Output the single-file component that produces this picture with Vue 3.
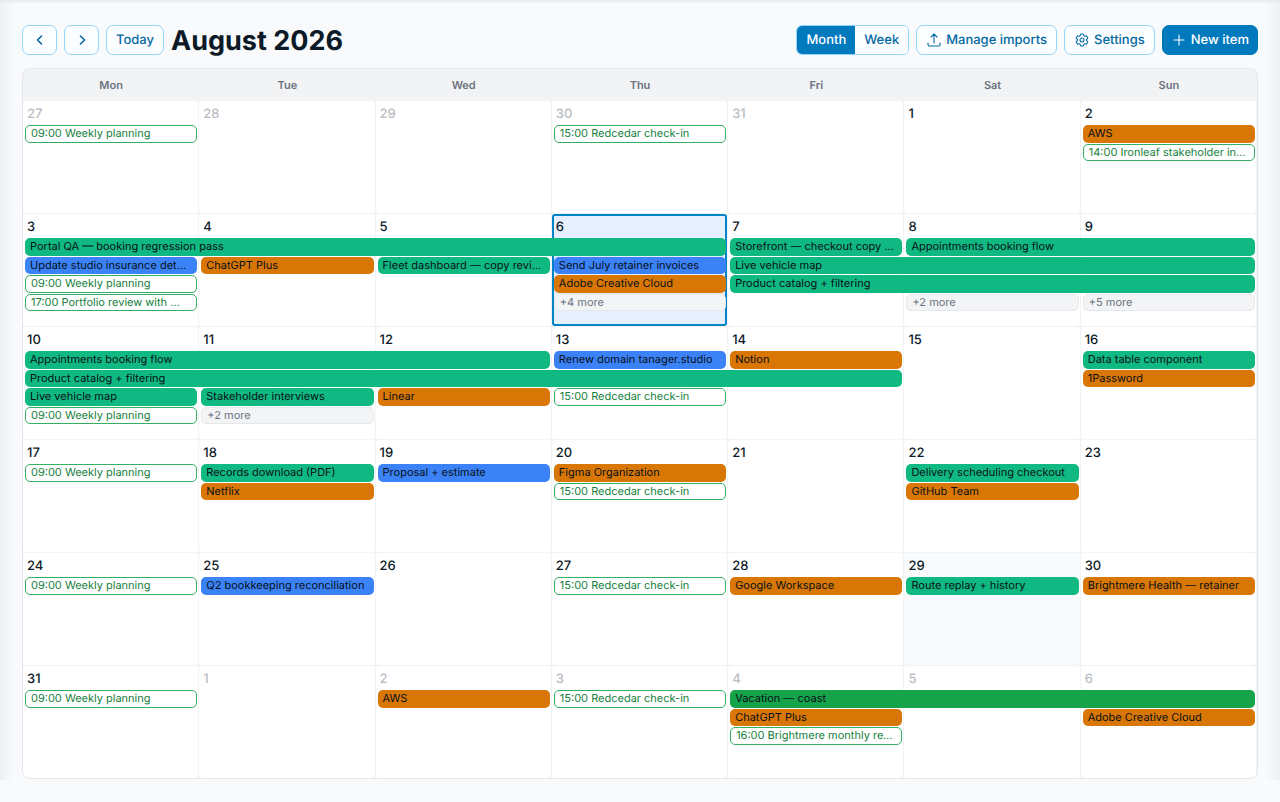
<template>
  <main class="calendar-page">
    <header class="toolbar">
      <div class="toolbar-group">
        <button class="btn btn-icon" aria-label="Previous month">
          <svg viewBox="0 0 16 16" class="icon"><path d="M9.500 4 5.500 8l4 4" /></svg>
        </button>
        <button class="btn btn-icon" aria-label="Next month">
          <svg viewBox="0 0 16 16" class="icon"><path d="M6.500 4 10.500 8l-4 4" /></svg>
        </button>
        <button class="btn">Today</button>
        <h1 class="title">August 2026</h1>
      </div>

      <div class="toolbar-group">
        <div class="view-switch">
          <button
            v-for="view in views"
            :key="view"
            :class="['view-button', { active: currentView === view }]"
            @click="currentView = view"
          >{{ view }}</button>
        </div>
        <button class="btn">
          <svg viewBox="0 0 24 24" class="icon"><path d="M3 16.500v2.250A2.250 2.250 0 0 0 5.250 21h13.500A2.250 2.250 0 0 0 21 18.750V16.500m-13.500-9L12 3m0 0 4.500 4.500M12 3v13.500" /></svg>
          Manage imports
        </button>
        <button class="btn">
          <svg viewBox="0 0 24 24" class="icon">
            <path d="M9.594 3.940c.09-.542.56-.94 1.110-.94h2.593c.55 0 1.020.398 1.110.94l.213 1.281c.063.374.313.686.645.870.074.040.147.083.22.127.325.196.72.257 1.075.124l1.217-.456a1.125 1.125 0 0 1 1.370.49l1.296 2.247a1.125 1.125 0 0 1-.26 1.431l-1.003.827c-.293.241-.438.613-.430.992a7.723 7.723 0 0 1 0 .255c-.008.378.137.750.430.991l1.004.827c.424.350.534.955.26 1.430l-1.298 2.247a1.125 1.125 0 0 1-1.369.491l-1.217-.456c-.355-.133-.75-.072-1.076.124a6.470 6.470 0 0 1-.22.128c-.331.183-.581.495-.644.869l-.213 1.281c-.09.543-.56.940-1.110.940h-2.594c-.55 0-1.019-.398-1.110-.94l-.213-1.281c-.062-.374-.312-.686-.644-.870a6.520 6.520 0 0 1-.22-.127c-.325-.196-.72-.257-1.076-.124l-1.217.456a1.125 1.125 0 0 1-1.369-.49l-1.297-2.247a1.125 1.125 0 0 1 .26-1.431l1.004-.827c.292-.24.437-.613.430-.991a6.932 6.932 0 0 1 0-.255c.007-.380-.138-.751-.430-.992l-1.004-.827a1.125 1.125 0 0 1-.26-1.430l1.297-2.247a1.125 1.125 0 0 1 1.370-.491l1.216.456c.356.133.751.072 1.076-.124.072-.044.146-.086.22-.128.332-.183.582-.495.644-.869l.214-1.280Z" />
            <path d="M15 12a3 3 0 1 1-6 0 3 3 0 0 1 6 0Z" />
          </svg>
          Settings
        </button>
        <button class="btn btn-primary">
          <svg viewBox="0 0 24 24" class="icon"><path d="M12 4.500v15m7.500-7.500h-15" /></svg>
          New item
        </button>
      </div>
    </header>

    <section class="calendar">
      <div class="weekdays">
        <div v-for="name in weekdays" :key="name" class="weekday">{{ name }}</div>
      </div>

      <div v-for="(week, w) in weeks" :key="w" class="week">
        <div
          v-for="(day, d) in week.days"
          :key="d"
          :class="['day', { outside: isOutside(w, day), selected: w === 1 && day === 6, today: w === 4 && day === 29 }]"
          :style="{ gridColumn: d + 1 }"
        >{{ day }}</div>
        <button
          v-for="(event, e) in week.events"
          :key="`event-${e}`"
          :class="['event', event[4]]"
          :style="{ gridColumn: `${event[0]} / span ${event[1]}`, gridRow: event[2] + 1 }"
        >{{ event[3] }}</button>
      </div>
    </section>
  </main>
</template>

<script setup>
import { ref } from 'vue'

const views = ['Month', 'Week']
const currentView = ref('Month')

const weekdays = ['Mon', 'Tue', 'Wed', 'Thu', 'Fri', 'Sat', 'Sun']

// Events: [first column, days, lane, label, type]
const weeks = [
  {
    days: [27, 28, 29, 30, 31, 1, 2],
    events: [
      [1, 1, 1, '09:00 Weekly planning', 'meeting'],
      [4, 1, 1, '15:00 Redcedar check-in', 'meeting'],
      [7, 1, 1, 'AWS', 'billing'],
      [7, 1, 2, '14:00 Ironleaf stakeholder interviews', 'meeting']
    ]
  },
  {
    days: [3, 4, 5, 6, 7, 8, 9],
    events: [
      [1, 4, 1, 'Portal QA — booking regression pass', 'project'],
      [5, 1, 1, 'Storefront — checkout copy review', 'project'],
      [6, 2, 1, 'Appointments booking flow', 'project'],
      [1, 1, 2, 'Update studio insurance details', 'task'],
      [2, 1, 2, 'ChatGPT Plus', 'billing'],
      [3, 1, 2, 'Fleet dashboard — copy review', 'project'],
      [4, 1, 2, 'Send July retainer invoices', 'task'],
      [5, 3, 2, 'Live vehicle map', 'project'],
      [1, 1, 3, '09:00 Weekly planning', 'meeting'],
      [4, 1, 3, 'Adobe Creative Cloud', 'billing'],
      [5, 3, 3, 'Product catalog + filtering', 'project'],
      [1, 1, 4, '17:00 Portfolio review with Meridian', 'meeting'],
      [4, 1, 4, '+4 more', 'more'],
      [6, 1, 4, '+2 more', 'more'],
      [7, 1, 4, '+5 more', 'more']
    ]
  },
  {
    days: [10, 11, 12, 13, 14, 15, 16],
    events: [
      [1, 3, 1, 'Appointments booking flow', 'project'],
      [4, 1, 1, 'Renew domain tanager.studio', 'task'],
      [5, 1, 1, 'Notion', 'billing'],
      [7, 1, 1, 'Data table component', 'project'],
      [1, 5, 2, 'Product catalog + filtering', 'project'],
      [7, 1, 2, '1Password', 'billing'],
      [1, 1, 3, 'Live vehicle map', 'project'],
      [2, 1, 3, 'Stakeholder interviews', 'project'],
      [3, 1, 3, 'Linear', 'billing'],
      [4, 1, 3, '15:00 Redcedar check-in', 'meeting'],
      [1, 1, 4, '09:00 Weekly planning', 'meeting'],
      [2, 1, 4, '+2 more', 'more']
    ]
  },
  {
    days: [17, 18, 19, 20, 21, 22, 23],
    events: [
      [1, 1, 1, '09:00 Weekly planning', 'meeting'],
      [2, 1, 1, 'Records download (PDF)', 'project'],
      [3, 1, 1, 'Proposal + estimate', 'task'],
      [4, 1, 1, 'Figma Organization', 'billing'],
      [6, 1, 1, 'Delivery scheduling checkout', 'project'],
      [2, 1, 2, 'Netflix', 'billing'],
      [4, 1, 2, '15:00 Redcedar check-in', 'meeting'],
      [6, 1, 2, 'GitHub Team', 'billing']
    ]
  },
  {
    days: [24, 25, 26, 27, 28, 29, 30],
    events: [
      [1, 1, 1, '09:00 Weekly planning', 'meeting'],
      [2, 1, 1, 'Q2 bookkeeping reconciliation', 'task'],
      [4, 1, 1, '15:00 Redcedar check-in', 'meeting'],
      [5, 1, 1, 'Google Workspace', 'billing'],
      [6, 1, 1, 'Route replay + history', 'project'],
      [7, 1, 1, 'Brightmere Health — retainer', 'billing']
    ]
  },
  {
    days: [31, 1, 2, 3, 4, 5, 6],
    events: [
      [1, 1, 1, '09:00 Weekly planning', 'meeting'],
      [3, 1, 1, 'AWS', 'billing'],
      [4, 1, 1, '15:00 Redcedar check-in', 'meeting'],
      [5, 3, 1, 'Vacation — coast', 'vacation'],
      [5, 1, 2, 'ChatGPT Plus', 'billing'],
      [7, 1, 2, 'Adobe Creative Cloud', 'billing'],
      [5, 1, 3, '16:00 Brightmere monthly review', 'meeting']
    ]
  }
]

// Days that belong to July or September
const isOutside = (week, day) => (week === 0 && day > 20) || (week === 5 && day < 20)
</script>

<style>
body {
  margin: 0;
  background: #f9fafc;
}
</style>

<style scoped>
.calendar-page {
  box-sizing: border-box;
  padding: 25px 22px 1px;
  font-family: Inter, "Liberation Sans", sans-serif;
  text-rendering: geometricPrecision;
  color: #0c1a28;
  background:
    linear-gradient(#e6e8ea, #f9fafc00) top / 100% 4px no-repeat,
    linear-gradient(to right, #eff0f2, #f9fafc00) left / 14px 100% no-repeat,
    linear-gradient(to left, #eff0f2, #f9fafc00) right / 14px 100% no-repeat;
}

button {
  font-family: inherit;
  text-rendering: inherit;
  cursor: pointer;
}

.toolbar {
  display: flex;
  justify-content: space-between;
  align-items: center;
  margin-bottom: 13px;
}

.toolbar-group {
  display: flex;
  align-items: center;
  gap: 7px;
}

.btn {
  box-sizing: border-box;
  display: inline-flex;
  align-items: center;
  gap: 4px;
  height: 30px;
  padding: 0 9px;
  border: 1px solid #93d5fa;
  border-radius: 7px;
  background: #fbfdff;
  color: #0369a1;
  font-size: 13px;
  font-weight: 500;
  white-space: nowrap;
}

.btn-icon {
  justify-content: center;
  width: 35px;
  padding: 0;
}

.btn-primary {
  padding: 0 8px;
  border-color: #0077b9;
  background: #0079bd;
  color: #fff;
}

.icon {
  width: 16px;
  height: 16px;
  fill: none;
  stroke: currentColor;
  stroke-width: 1.6;
  stroke-linecap: round;
  stroke-linejoin: round;
}

.title {
  margin: 0;
  padding-top: 2px;
  font-size: 27px;
  line-height: 28px;
  font-weight: 700;
}

.view-switch {
  box-sizing: border-box;
  display: flex;
  height: 30px;
  border: 1px solid #93d5fa;
  border-radius: 6px;
  overflow: hidden;
}

.view-button {
  padding: 0 9px;
  border: 0;
  background: #fbfdff;
  color: #0369a1;
  font-size: 13px;
  font-weight: 500;
}

.view-button.active {
  background: #0079bd;
  color: #fff;
}

.calendar {
  border: 1px solid #e5e7eb;
  border-radius: 8px;
  overflow: hidden;
  background: #f2f3f5;
}

.weekdays {
  display: grid;
  grid-template-columns: repeat(7, 1fr);
}

.weekday {
  height: 31px;
  color: #6b7280;
  font-size: 11px;
  line-height: 32px;
  font-weight: 600;
  text-align: center;
}

.week {
  display: grid;
  grid-template-columns: repeat(7, minmax(0, 1fr));
  grid-template-rows: 25px repeat(4, minmax(0, 1fr)) 14px;
  height: 113px;
}

.day {
  box-sizing: border-box;
  grid-row: 1 / -1;
  margin: 1px 1px 0 0;
  padding: 3px 4px;
  border-radius: 3px;
  background: #fff;
  font-size: 13px;
  line-height: 20px;
  font-weight: 500;
}

.day.outside {
  color: #b9bcc1;
}

.day.today {
  background: #f9fafc;
}

.day.selected {
  padding: 1px 2px;
  border: 2px solid #0284c7;
  background: #e6effe;
}

.event {
  box-sizing: border-box;
  margin: 0 2px 1px 2px;
  padding: 0 7px 0 5px;
  border: 0;
  border-radius: 5px;
  color: #071018;
  font-size: 11px;
  line-height: 17px;
  text-align: left;
  white-space: nowrap;
  overflow: hidden;
  text-overflow: ellipsis;
}

.project {
  background: #10b981;
}

.task {
  background: #3b82f6;
}

.billing {
  background: #d97706;
}

.vacation {
  background: #16a34a;
}

.meeting {
  border: 1px solid #34ae62;
  background: #fff;
  color: #15803d;
  line-height: 15px;
}

.more {
  border: 1px solid #e5e7eb;
  background: #f3f4f6;
  color: #6b7280;
  line-height: 15px;
}
</style>
